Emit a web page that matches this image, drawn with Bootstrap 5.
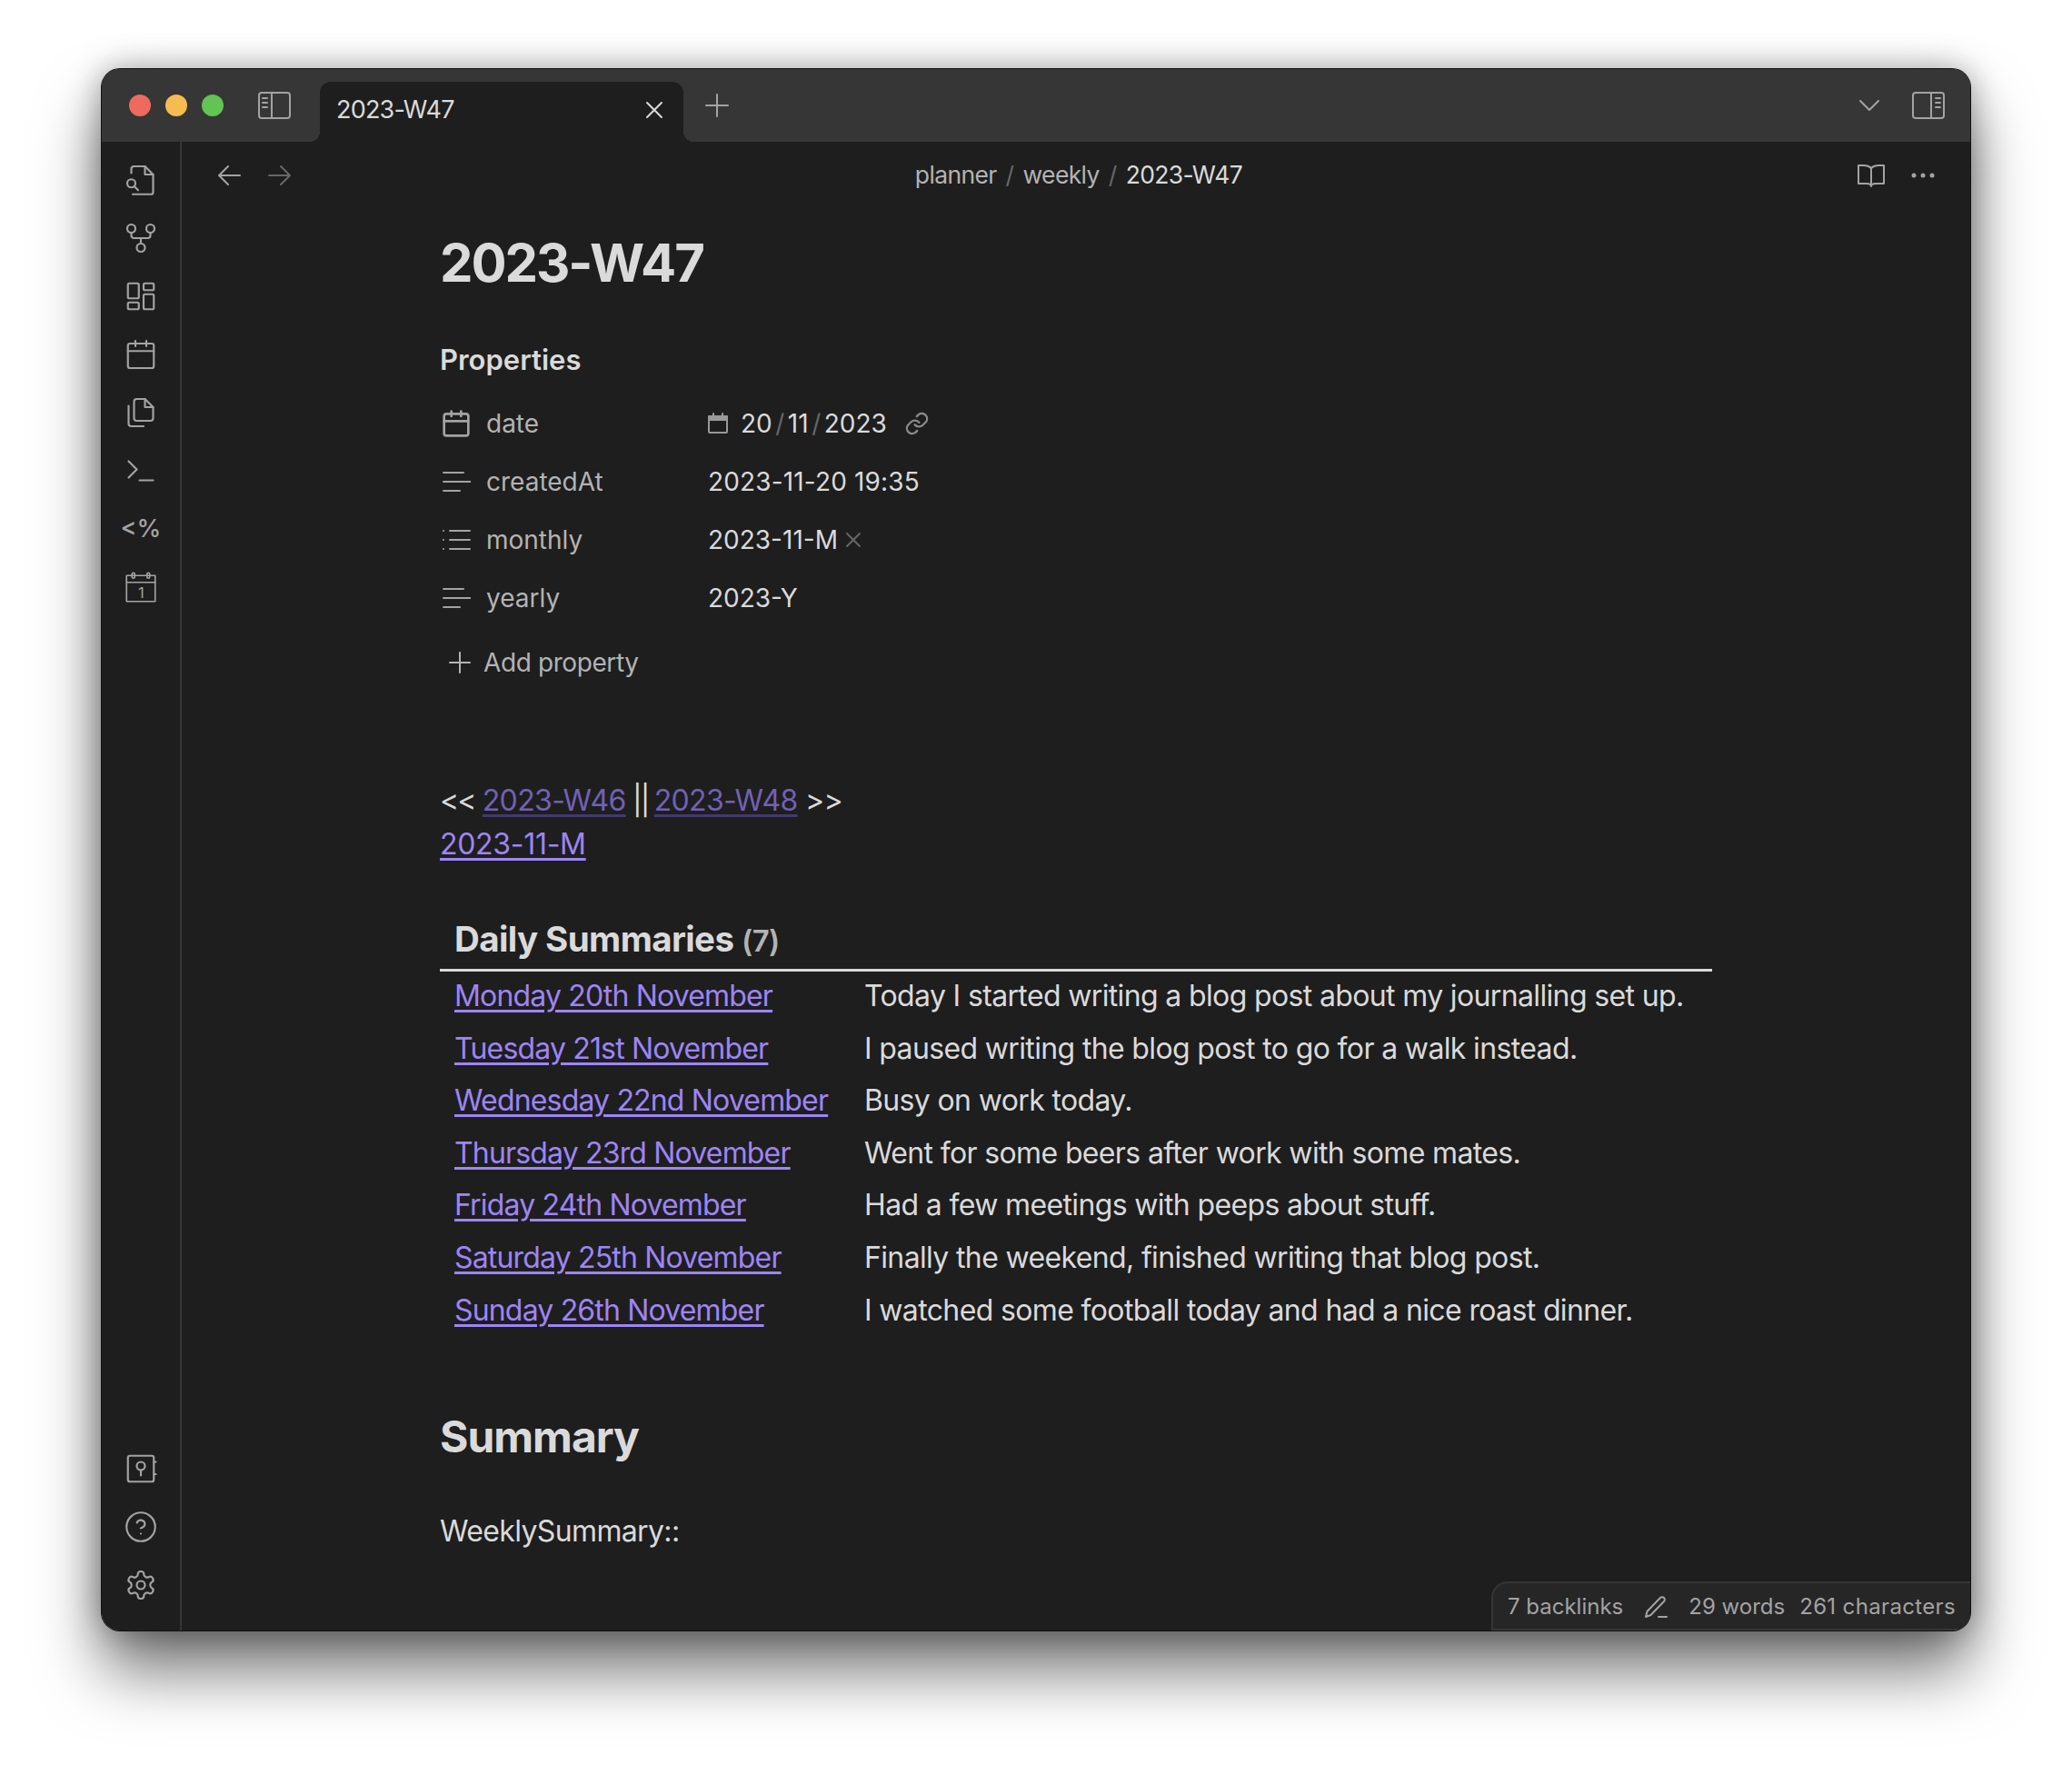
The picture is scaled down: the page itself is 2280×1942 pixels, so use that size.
<!DOCTYPE html>
<html lang="en">
  <head>
    <meta charset="UTF-8" />
    <title>2023-W47</title>
    <link rel="stylesheet" href="https://cdn.jsdelivr.net/npm/bootstrap@5.3.3/dist/css/bootstrap.min.css" />
    <style>
      body {
        background: #fff;
        font-family: Inter, "Liberation Sans", sans-serif;
        font-size: 32px;
        letter-spacing: -0.02em;
        color: #dadada;
        padding: 76px 0 0 112px;
        width: 2280px;
        height: 1942px;
        overflow: hidden;
      }
      svg.ico {
        fill: none;
        stroke: currentColor;
        stroke-width: 2;
        stroke-linecap: round;
        stroke-linejoin: round;
        flex: none;
        display: block;
      }
      .app-window {
        width: 2056px;
        height: 1718px;
        background: #1e1e1e;
        border-radius: 20px;
        overflow: hidden;
        position: relative;
      }
      .window-shadow {
        width: 2056px;
        height: 1718px;
        border-radius: 20px;
        box-shadow: 0 0 0 1px #111, inset 0 0 0 1px #555, 0 44px 70px rgba(0, 0, 0, 0.55), 0 0 36px rgba(0, 0, 0, 0.35);
      }
      .title-bar {
        height: 80px;
        background: #363636;
        color: #a3a3a3;
      }
      .lights {
        gap: 16px;
        padding-left: 30px;
      }
      .traffic {
        width: 24px;
        height: 24px;
        border-radius: 50%;
      }
      .panel-left {
        margin-left: 38px;
      }
      .tab-active {
        width: 400px;
        height: 66px;
        margin-left: 32px;
        background: #1e1e1e;
        border-radius: 12px 12px 0 0;
        padding: 0 20px 4px 18px;
        font-size: 27px;
        letter-spacing: -0.8px;
        color: #dadada;
        position: relative;
      }
      .tab-active::before,
      .tab-active::after {
        content: "";
        position: absolute;
        bottom: 0;
        width: 12px;
        height: 12px;
      }
      .tab-active::before {
        left: -12px;
        background: radial-gradient(circle at 0 0, #363636 12px, #1e1e1e 12.5px);
      }
      .tab-active::after {
        right: -12px;
        background: radial-gradient(circle at 100% 0, #363636 12px, #1e1e1e 12.5px);
      }
      .tab-plus {
        margin-left: 23px;
      }
      .title-right {
        gap: 35px;
        padding-right: 28px;
      }
      .side-rail {
        width: 88px;
        border-right: 2px solid #363636;
        color: #a3a3a3;
        padding: 24px 0 32px;
      }
      .rail-group {
        gap: 28px;
      }
      svg.rail-ico {
        stroke-width: 1.45;
      }
      svg.rail-thin {
        stroke-width: 1.1;
      }
      .templater-glyph {
        font-size: 27px;
        line-height: 36px;
        height: 36px;
        font-weight: 500;
        letter-spacing: 0;
      }
      .view-head {
        height: 72px;
        padding: 2px 38px 0 38px;
        color: #a3a3a3;
      }
      .nav-arrows {
        gap: 28px;
        width: 93px;
      }
      .head-right {
        width: 87px;
      }
      .crumbs {
        --bs-breadcrumb-margin-bottom: 0;
        --bs-breadcrumb-divider-color: #666;
        --bs-breadcrumb-item-padding-x: 10px;
        --bs-breadcrumb-item-active-color: #dadada;
        font-size: 26.5px;
        color: #b3b3b3;
      }
      .note-body {
        width: 1400px;
        margin: 0 auto;
      }
      .note-title {
        font-size: 58px;
        font-weight: 700;
        line-height: 70px;
        letter-spacing: -2.1px;
        margin: 26px 0 0;
      }
      .props-title {
        font-size: 31px;
        font-weight: 600;
        line-height: 40px;
        letter-spacing: 0;
        margin: 52px 0 18px;
      }
      .prop-row {
        height: 64px;
        font-size: 28px;
        letter-spacing: 0;
      }
      .prop-icon {
        width: 51px;
        padding-left: 2px;
        color: #a3a3a3;
      }
      .prop-name {
        width: 244px;
        color: #b3b3b3;
      }
      .prop-value {
        letter-spacing: 0.15px;
      }
      .date-icon {
        color: #999;
        margin-right: 14px;
      }
      .date-sep {
        color: #666;
        padding: 0 3.5px;
      }
      .date-link {
        color: #8a8a8a;
        margin-left: 19px;
      }
      .add-prop {
        height: 64px;
        margin-top: 7px;
        padding-left: 8px;
        font-size: 28px;
        letter-spacing: -0.4px;
        color: #b3b3b3;
        gap: 12px;
      }
      .note-links {
        line-height: 48px;
        margin-top: 96px;
      }
      .note-links a,
      .day-table a {
        color: #9d85f5;
        text-underline-offset: 4px;
        text-decoration-thickness: 2.5px;
      }
      .day-table a {
        letter-spacing: -0.83px;
      }
      .note-links a.month-link {
        letter-spacing: -0.3px;
      }
      .note-links a.dim-link {
        color: #7161b5;
        text-decoration-color: #43396e;
      }
      .tight-open {
        letter-spacing: -2px;
      }
      .tight-bars {
        letter-spacing: -2px;
        margin-right: -2px;
        margin-left: -1px;
      }
      .day-table {
        --bs-table-bg: transparent;
        --bs-table-color: #dadada;
        margin: 48px 0 0;
        width: 1400px;
        table-layout: fixed;
      }
      .day-table th {
        font-weight: 700;
        font-size: 38.5px;
        letter-spacing: -0.6px;
        padding: 4px 16px 3px;
        height: 57px;
        border-bottom: 3px solid #dadada;
      }
      .day-table th small {
        font-size: 33px;
        color: #b3b3b3;
        font-weight: 600;
      }
      .day-table td {
        padding: 4.8px 16px;
        line-height: 48px;
        border: 0;
        white-space: nowrap;
      }
      .day-table tbody tr:first-child td {
        padding-top: 3.2px;
      }
      .day-col {
        width: 451px;
      }
      .summary-title {
        font-size: 48px;
        font-weight: 700;
        letter-spacing: -1px;
        line-height: 60px;
        margin: 81px 0 0;
      }
      .summary-line {
        margin: 50px 0 0;
        line-height: 48px;
      }
      .status-bar {
        position: absolute;
        right: 0;
        bottom: 0;
        width: 527px;
        height: 54px;
        background: #262626;
        border: 2px solid #363636;
        border-right: 0;
        border-radius: 18px 0 0 0;
        padding: 2px 0 0 16px;
        font-size: 24px;
        letter-spacing: 0;
        color: #a3a3a3;
      }
      .status-pencil {
        margin: 0 22px;
      }
      .char-count {
        letter-spacing: 0.35px;
        margin-left: 16px;
      }
    </style>
  </head>
  <body>
    <div class="window-shadow">
      <div class="app-window d-flex flex-column">
        <!-- Title bar -->
        <div class="title-bar d-flex align-items-end flex-shrink-0">
          <div class="lights d-flex align-items-center align-self-center">
            <span class="traffic" style="background:#ee6a5f"></span>
            <span class="traffic" style="background:#f5bd4f"></span>
            <span class="traffic" style="background:#61c454"></span>
          </div>
          <div class="panel-left align-self-center">
            <svg class="ico" width="36" height="32" viewBox="0 0 36 32"><rect x="1" y="2" width="34" height="28" rx="3"/><path d="M15 2v28M5 8h5M5 13h5M5 18h5"/></svg>
          </div>
          <div class="tab-active d-flex align-items-center justify-content-between">
            <span>2023-W47</span>
            <svg class="ico" width="24" height="24" viewBox="0 0 24 24"><path d="M4 4l16 16M20 4L4 20"/></svg>
          </div>
          <div class="tab-plus align-self-center">
            <svg class="ico" width="28" height="28" viewBox="0 0 28 28"><path d="M14 2v24M2 14h24"/></svg>
          </div>
          <div class="title-right ms-auto align-self-center d-flex align-items-center">
            <svg class="ico" width="24" height="24" viewBox="0 0 24 24"><path d="M2 7l10 10L22 7"/></svg>
            <svg class="ico" width="36" height="32" viewBox="0 0 36 32"><rect x="1" y="2" width="34" height="28" rx="3"/><path d="M21 2v28M26 8h5M26 13h5M26 18h5"/></svg>
          </div>
        </div>

        <div class="d-flex flex-grow-1 overflow-hidden">
          <!-- Left ribbon -->
          <div class="side-rail d-flex flex-column justify-content-between align-items-center flex-shrink-0">
            <div class="rail-group d-flex flex-column align-items-center">
              <svg class="ico rail-ico" width="36" height="36" viewBox="0 0 24 24"><path d="M5 7V4a2 2 0 0 1 2-2h8l6 6v13a1.500 1.500 0 0 1-1.500 1.500H6"/><path d="M15 2v6h6"/><circle cx="5" cy="14.500" r="3"/><path d="M7.200 16.700L10 19.500"/></svg>
              <svg class="ico rail-ico" width="36" height="36" viewBox="0 0 24 24"><circle cx="5" cy="5" r="3"/><circle cx="19" cy="5" r="3"/><circle cx="12" cy="19" r="3"/><path d="M5 8v2a2 2 0 0 0 2 2h10a2 2 0 0 0 2-2V8M12 12v4"/></svg>
              <svg class="ico rail-ico" width="36" height="36" viewBox="0 0 24 24"><rect x="2.500" y="2.500" width="8" height="11" rx="1"/><rect x="14" y="2.500" width="7.500" height="5" rx="1"/><rect x="14" y="10.500" width="7.500" height="11" rx="1"/><rect x="2.500" y="16.500" width="8" height="5" rx="1"/></svg>
              <svg class="ico rail-ico" width="36" height="36" viewBox="0 0 24 24"><rect x="2.500" y="4" width="19" height="18" rx="1.500"/><path d="M16 2v4M8 2v4M2.500 9.500h19"/></svg>
              <svg class="ico rail-ico" width="36" height="36" viewBox="0 0 24 24"><path d="M15 2H9a2 2 0 0 0-2 2v12a2 2 0 0 0 2 2h10a2 2 0 0 0 2-2V8z"/><path d="M15 2v6h6"/><path d="M3 7v13a2 2 0 0 0 2 2h9"/></svg>
              <svg class="ico rail-ico" width="36" height="36" viewBox="0 0 24 24"><path d="M3 17l6-6-6-6M11 19h10"/></svg>
              <div class="templater-glyph">&lt;%</div>
              <svg class="ico rail-ico rail-thin" width="36" height="36" viewBox="0 0 24 24"><rect x="1.500" y="3.500" width="21" height="19"/><path d="M1.500 8.500h21"/><rect x="5.500" y="1.500" width="2" height="4" rx="1"/><rect x="16.500" y="1.500" width="2" height="4" rx="1"/><text x="12" y="20" text-anchor="middle" font-size="11" font-family="Inter" fill="currentColor" stroke="none">1</text></svg>
            </div>
            <div class="rail-group d-flex flex-column align-items-center">
              <svg class="ico rail-ico" width="36" height="36" viewBox="0 0 24 24"><rect x="2.500" y="2.500" width="19" height="19" rx="1.500"/><circle cx="12" cy="10" r="3"/><path d="M12 13v4M21.500 7h1.500M21.500 16h1.500"/></svg>
              <svg class="ico rail-ico" width="36" height="36" viewBox="0 0 24 24"><circle cx="12" cy="12" r="10.500"/><path d="M9.100 9a3 3 0 0 1 5.800 1c0 2-3 3-3 3M12 17h.01"/></svg>
              <svg class="ico rail-ico" width="36" height="36" viewBox="0 0 24 24"><path d="M12.220 2h-.44a2 2 0 0 0-2 2v.18a2 2 0 0 1-1 1.730l-.43.25a2 2 0 0 1-2 0l-.15-.08a2 2 0 0 0-2.730.73l-.22.38a2 2 0 0 0 .73 2.730l.15.1a2 2 0 0 1 1 1.720v.51a2 2 0 0 1-1 1.740l-.15.09a2 2 0 0 0-.73 2.730l.22.38a2 2 0 0 0 2.730.73l.15-.08a2 2 0 0 1 2 0l.43.25a2 2 0 0 1 1 1.730V20a2 2 0 0 0 2 2h.44a2 2 0 0 0 2-2v-.18a2 2 0 0 1 1-1.730l.43-.25a2 2 0 0 1 2 0l.15.08a2 2 0 0 0 2.730-.73l.22-.39a2 2 0 0 0-.73-2.730l-.15-.08a2 2 0 0 1-1-1.740v-.5a2 2 0 0 1 1-1.740l.15-.09a2 2 0 0 0 .73-2.730l-.22-.38a2 2 0 0 0-2.730-.73l-.15.08a2 2 0 0 1-2 0l-.43-.25a2 2 0 0 1-1-1.730V4a2 2 0 0 0-2-2z"/><circle cx="12" cy="12" r="3"/></svg>
            </div>
          </div>

          <!-- Note pane -->
          <div class="flex-grow-1 d-flex flex-column">
            <div class="view-head d-flex align-items-center justify-content-between flex-shrink-0">
              <div class="nav-arrows d-flex align-items-center">
                <svg class="ico" width="28" height="28" viewBox="0 0 28 28"><path d="M26 14H3M13 4L3 14l10 10"/></svg>
                <svg class="ico" width="28" height="28" viewBox="0 0 28 28" style="opacity:.55"><path d="M2 14h23M15 4l10 10-10 10"/></svg>
              </div>
              <nav>
                <ol class="breadcrumb crumbs">
                  <li class="breadcrumb-item">planner</li>
                  <li class="breadcrumb-item">weekly</li>
                  <li class="breadcrumb-item active">2023-W47</li>
                </ol>
              </nav>
              <div class="head-right d-flex align-items-center justify-content-between">
                <svg class="ico" width="32" height="28" viewBox="0 0 32 28"><path d="M16 6c-2-2-5-3-8-3H2v20h9c2.500 0 5 1 5 3 0-2 2.500-3 5-3h9V3h-6c-3 0-6 1-8 3zM16 6v20"/></svg>
                <svg width="28" height="8" viewBox="0 0 28 8" fill="currentColor"><circle cx="4" cy="4" r="2.500"/><circle cx="14" cy="4" r="2.500"/><circle cx="24" cy="4" r="2.500"/></svg>
              </div>
            </div>

            <div class="note-body">
              <h1 class="note-title">2023-W47</h1>
              <div class="props-title">Properties</div>

              <div class="prop-row d-flex align-items-center">
                <div class="prop-icon"><svg class="ico" width="32" height="32" viewBox="0 0 24 24"><rect x="2" y="4" width="20" height="18" rx="2"/><path d="M16 2v4M8 2v4M2 10h20"/></svg></div>
                <div class="prop-name">date</div>
                <div class="d-flex align-items-center">
                  <svg class="ico date-icon" width="22" height="24" viewBox="0 0 22 24"><rect x="1" y="4" width="20" height="18" rx="1"/><path d="M1 4h20v4H1z" fill="currentColor"/><path d="M6 1v3M16 1v3"/></svg>
                  <span>20<span class="date-sep">/</span>11<span class="date-sep">/</span>2023</span>
                  <svg class="ico date-link" width="28" height="28" viewBox="0 0 24 24"><path d="M10 13a5 5 0 0 0 7.500.5l3-3a5 5 0 0 0-7-7l-1.700 1.700"/><path d="M14 11a5 5 0 0 0-7.500-.5l-3 3a5 5 0 0 0 7 7l1.700-1.700"/></svg>
                </div>
              </div>
              <div class="prop-row d-flex align-items-center">
                <div class="prop-icon"><svg class="ico" width="32" height="32" viewBox="0 0 32 32"><path d="M2 6h22M2 16h30M2 26h18"/></svg></div>
                <div class="prop-name">createdAt</div>
                <div class="prop-value">2023-11-20 19:35</div>
              </div>
              <div class="prop-row d-flex align-items-center">
                <div class="prop-icon"><svg class="ico" width="32" height="32" viewBox="0 0 32 32"><path d="M9 6h22M9 16h22M9 26h22M2 6h.01M2 16h.01M2 26h.01"/></svg></div>
                <div class="prop-name">monthly</div>
                <div class="d-flex align-items-center">
                  <span>2023-11-M</span>
                  <svg class="ico ms-2" width="18" height="18" viewBox="0 0 18 18" style="color:#666"><path d="M2 2l14 14M16 2L2 16"/></svg>
                </div>
              </div>
              <div class="prop-row d-flex align-items-center">
                <div class="prop-icon"><svg class="ico" width="32" height="32" viewBox="0 0 32 32"><path d="M2 6h22M2 16h30M2 26h18"/></svg></div>
                <div class="prop-name">yearly</div>
                <div>2023-Y</div>
              </div>
              <div class="add-prop d-flex align-items-center">
                <svg class="ico" width="28" height="28" viewBox="0 0 28 28"><path d="M14 3v22M3 14h22"/></svg>
                <span>Add property</span>
              </div>

              <div class="note-links">
                <span class="tight-open">&lt;&lt;</span> <a class="dim-link" href="#">2023-W46</a> <span class="tight-bars">||</span> <a class="dim-link" href="#">2023-W48</a> &gt;&gt;<br />
                <a class="month-link" href="#">2023-11-M</a>
              </div>

              <table class="table day-table">
                <colgroup><col class="day-col" /><col /></colgroup>
                <thead>
                  <tr><th colspan="2">Daily Summaries <small>(7)</small></th></tr>
                </thead>
                <tbody>
                  <tr><td><a href="#">Monday 20th November</a></td><td>Today I started writing a blog post about my journalling set up.</td></tr>
                  <tr><td><a href="#">Tuesday 21st November</a></td><td>I paused writing the blog post to go for a walk instead.</td></tr>
                  <tr><td><a href="#">Wednesday 22nd November</a></td><td>Busy on work today.</td></tr>
                  <tr><td><a href="#">Thursday 23rd November</a></td><td>Went for some beers after work with some mates.</td></tr>
                  <tr><td><a href="#">Friday 24th November</a></td><td>Had a few meetings with peeps about stuff.</td></tr>
                  <tr><td><a href="#">Saturday 25th November</a></td><td>Finally the weekend, finished writing that blog post.</td></tr>
                  <tr><td><a href="#">Sunday 26th November</a></td><td>I watched some football today and had a nice roast dinner.</td></tr>
                </tbody>
              </table>

              <h2 class="summary-title">Summary</h2>
              <p class="summary-line">WeeklySummary::</p>
            </div>
          </div>
        </div>

        <!-- Status bar -->
        <div class="status-bar d-flex align-items-center">
          <span>7 backlinks</span>
          <svg class="ico status-pencil" width="28" height="28" viewBox="0 0 28 28"><path d="M3 25l1.500-6L19 4a2.800 2.800 0 0 1 4 4L8.500 23zM17 25h9"/></svg>
          <span>29 words</span>
          <span class="char-count">261 characters</span>
        </div>
      </div>
    </div>
    <script src="https://cdn.jsdelivr.net/npm/bootstrap@5.3.3/dist/js/bootstrap.bundle.min.js"></script>
  </body>
</html>
